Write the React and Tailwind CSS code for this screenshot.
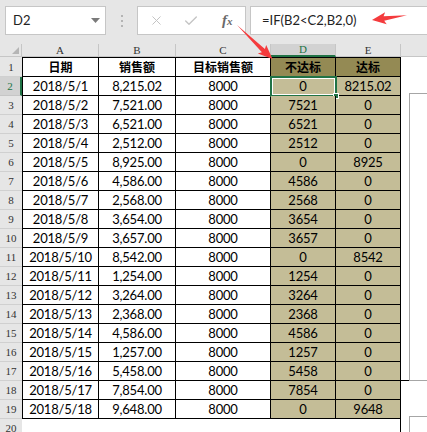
import { X, Check } from "lucide-react";

const rows = [
  ["2018/5/1", "8,215.02", "0", "8215.02"],
  ["2018/5/2", "7,521.00", "7521", "0"],
  ["2018/5/3", "6,521.00", "6521", "0"],
  ["2018/5/4", "2,512.00", "2512", "0"],
  ["2018/5/5", "8,925.00", "0", "8925"],
  ["2018/5/6", "4,586.00", "4586", "0"],
  ["2018/5/7", "2,568.00", "2568", "0"],
  ["2018/5/8", "3,654.00", "3654", "0"],
  ["2018/5/9", "3,657.00", "3657", "0"],
  ["2018/5/10", "8,542.00", "0", "8542"],
  ["2018/5/11", "1,254.00", "1254", "0"],
  ["2018/5/12", "3,264.00", "3264", "0"],
  ["2018/5/13", "2,368.00", "2368", "0"],
  ["2018/5/14", "4,586.00", "4586", "0"],
  ["2018/5/15", "1,257.00", "1257", "0"],
  ["2018/5/16", "5,458.00", "5458", "0"],
  ["2018/5/17", "7,854.00", "7854", "0"],
  ["2018/5/18", "9,648.00", "0", "9648"],
];

const TopBar = () => {
  return (
    <div className="h-[44px] bg-[#e6e6e6] flex items-start pt-[6px] pl-[5px]">
      <div className="w-[101px] h-[29px] bg-white border border-[#c6c6c6] flex items-center justify-between pl-[7px] pr-[5px]">
        <span className="text-[13px] text-[#222] pt-[1px]">D2</span>
        <svg width="9" height="5" viewBox="0 0 9 5">
          <path d="M0 0 L9 0 L4.5 5 Z" fill="#7a7a7a" />
        </svg>
      </div>
      <div className="w-[31px] h-[29px] flex flex-col items-center justify-center gap-[3px]">
        <div className="w-[2px] h-[2px] bg-[#b4b4b4]"></div>
        <div className="w-[2px] h-[2px] bg-[#b4b4b4]"></div>
        <div className="w-[2px] h-[2px] bg-[#b4b4b4]"></div>
      </div>
      <div className="w-[109px] h-[29px] bg-white border border-[#c6c6c6] flex items-center pl-[11px]">
        <X size={15} strokeWidth={1.6} color="#c4c4c4" />
        <Check size={16} strokeWidth={2} color="#c4c4c4" className="ml-[19px]" />
        <span className="ml-[23px] text-[15px] italic font-bold text-[#6a6a6a] font-[family-name:'Liberation_Serif',serif] leading-none">
          f<span className="text-[11px]">x</span>
        </span>
      </div>
      <div className="ml-[4px] flex-1 h-[29px] bg-white border border-r-0 border-[#c6c6c6] flex items-center pl-[11px]">
        <span className="text-[13px] text-[#222] pt-[1px]">=IF(B2&lt;C2,B2,0)</span>
      </div>
    </div>
  );
};

const ColumnHeader = () => {
  const head = "h-full border-r border-b border-[#c6c6c6] flex items-center justify-center text-[11px] text-[#333] font-[family-name:'Liberation_Serif',serif]";
  return (
    <div className="h-[13px] flex bg-[#e6e6e6]">
      <div className="w-[22px] h-full border-r border-b border-[#c6c6c6] flex items-end justify-end pr-[2px] pb-[2px]">
        <svg width="7" height="7" viewBox="0 0 7 7">
          <path d="M7 0 L7 7 L0 7 Z" fill="#b5b5b5" />
        </svg>
      </div>
      <div className={`w-[77px] ${head}`}>A</div>
      <div className={`w-[77px] ${head}`}>B</div>
      <div className={`w-[95px] ${head}`}>C</div>
      <div className="w-[65px] h-full border-r border-[#c6c6c6] border-b-2 border-b-[#217346] bg-[#d2d2d2] flex items-center justify-center text-[11px] text-[#217346] font-[family-name:'Liberation_Serif',serif]">
        D
      </div>
      <div className={`w-[65px] ${head}`}>E</div>
      <div className="flex-1 h-full border-b border-[#c6c6c6]"></div>
    </div>
  );
};

const RowHead = ({ n, active }) => {
  return (
    <div
      className={
        active
          ? "w-[22px] h-full bg-[#d2d2d2] border-b border-[#c6c6c6] border-r-2 border-r-[#217346] flex items-end justify-center pb-[1px] text-[11px] text-[#217346] font-[family-name:'Liberation_Serif',serif]"
          : "w-[22px] h-full bg-[#e6e6e6] border-b border-[#d0d0d0] flex items-end justify-center pb-[1px] text-[11px] text-[#333] font-[family-name:'Liberation_Serif',serif]"
      }
    >
      {n}
    </div>
  );
};

const App = () => {
  const cell = "h-full border-r border-b border-black flex items-center justify-center pt-[2px] text-[13px] text-black tracking-[-0.2px]";
  return (
    <div className="relative w-[427px] h-[432px] overflow-hidden bg-white font-[family-name:Lato,'Noto_Sans_CJK_SC',sans-serif]">
      <TopBar />
      <ColumnHeader />

      {/* header row */}
      <div className="h-[20px] flex">
        <RowHead n="1" />
        <div className="w-[77px] h-full border border-black flex items-center justify-center text-[12px] font-bold font-[family-name:'Noto_Sans_CJK_SC',sans-serif]">
          日期
        </div>
        <div className="w-[77px] h-full border-t border-r border-b border-black flex items-center justify-center text-[12px] font-bold font-[family-name:'Noto_Sans_CJK_SC',sans-serif]">
          销售额
        </div>
        <div className="w-[95px] h-full border-t border-r border-b border-black flex items-center justify-center text-[12px] font-bold font-[family-name:'Noto_Sans_CJK_SC',sans-serif]">
          目标销售额
        </div>
        <div className="w-[65px] h-full bg-[#948a54] border-t border-r border-b border-black flex items-center justify-center text-[12px] font-bold font-[family-name:'Noto_Sans_CJK_SC',sans-serif]">
          不达标
        </div>
        <div className="w-[65px] h-full bg-[#948a54] border-t border-r border-b border-black flex items-center justify-center text-[12px] font-bold font-[family-name:'Noto_Sans_CJK_SC',sans-serif]">
          达标
        </div>
        <div className="flex-1"></div>
      </div>

      {rows.map((r, i) => (
        <div key={i} className="h-[19px] flex">
          <RowHead n={i + 2} active={i === 0} />
          <div className={`w-[77px] border-l ${cell}`}>{r[0]}</div>
          <div className={`w-[77px] ${cell}`}>{r[1]}</div>
          <div className={`w-[95px] ${cell}`}>8000</div>
          <div className={`w-[65px] bg-[#c4bd97] relative ${cell}`}>
            {r[2]}
            {i === 0 && (
              <div className="absolute -left-[1px] -top-[1px] -right-[2px] -bottom-[2px] border-2 border-[#217346]">
                <div className="absolute inset-0 border border-white"></div>
                <div className="absolute -right-[4px] -bottom-[4px] w-[6px] h-[6px] bg-[#217346] border border-white"></div>
              </div>
            )}
          </div>
          <div className={`w-[65px] bg-[#c4bd97] ${cell}`}>{r[3]}</div>
          <div className={i === 15 ? "flex-1 border-b border-black" : "flex-1"}></div>
        </div>
      ))}

      <div className="h-[19px] flex">
        <RowHead n="20" />
        <div className="w-[379px] h-full border-r border-black"></div>
        <div className="flex-1"></div>
      </div>

      {/* objects floating over the sheet */}
      <div className="absolute left-[409px] top-[93px] w-[30px] h-[288px] border border-[#a6a6a6] bg-white"></div>
      <div className="absolute left-[409px] top-[416px] w-[30px] h-[30px] border border-[#a6a6a6] bg-white"></div>

      {/* red arrows */}
      <svg className="absolute left-0 top-0 pointer-events-none" width="427" height="432" viewBox="0 0 427 432">
        <path d="M372 20 L385.1 12.3 L383.6 16.3 L407 15.2 L384.2 20.7 L386.7 24.2 Z" fill="#f43b3d" />
        <path d="M272.5 59 L257.8 53.5 L261.9 52.2 L237 25 L264.9 49 L266.2 44.9 Z" fill="#f43b3d" />
      </svg>
    </div>
  );
};

export default App;
